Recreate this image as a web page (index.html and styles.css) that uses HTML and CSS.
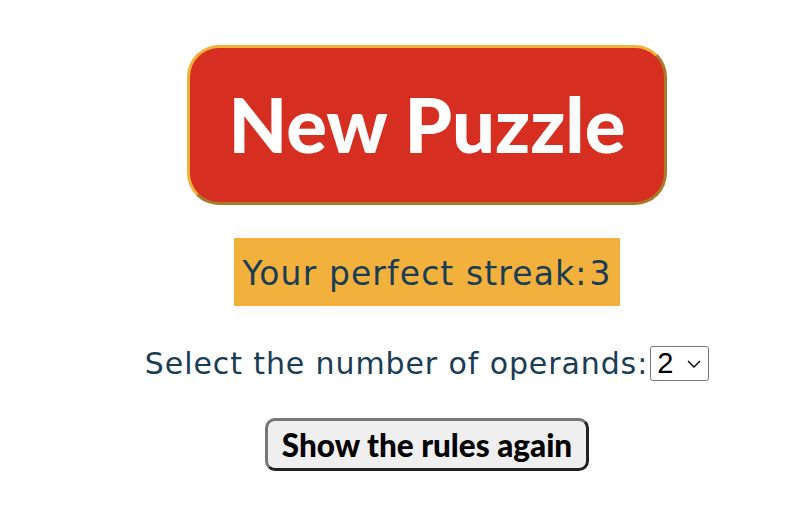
FILE: index.html
```html
<!DOCTYPE html>
<html>
<head>
<meta charset="utf-8">
<link rel="stylesheet" href="styles.css">
</head>
<body>
<main class="page">
  <button class="new-puzzle">New Puzzle</button>
  <div class="streak">Your perfect streak:<span class="streak-num">3</span></div>
  <div class="operands">
    <label for="ops">Select the number of operands:</label>
    <select id="ops" class="ops-select"><option>2</option><option>3</option><option>4</option></select>
  </div>
  <button class="rules">Show the rules again</button>
</main>
</body>
</html>
```

FILE: styles.css
```css
html, body {
  margin: 0;
  padding: 0;
  background: #ffffff;
}
.page {
  display: flex;
  flex-direction: column;
  align-items: center;
  padding: 45px 0 0 64px;
  width: 726px;
}
.new-puzzle {
  width: 480px;
  height: 160px;
  box-sizing: border-box;
  background: #d62e20;
  color: #ffffff;
  border: 3px solid;
  border-color: #f0b03c #a87a2a #a87a2a #f0b03c;
  border-radius: 32px;
  font-family: "Lato", sans-serif;
  font-weight: 900;
  font-size: 76px;
  padding: 0 0 4px 0;
  cursor: pointer;
}
.streak {
  margin-top: 33px;
  width: 386px;
  height: 68px;
  box-sizing: border-box;
  background: #f2b13d;
  color: #1a3d55;
  font-family: "DejaVu Sans", sans-serif;
  font-size: 33px;
  letter-spacing: 1.1px;
  display: flex;
  align-items: center;
  justify-content: center;
  padding-top: 2px;
}
.streak-num {
  margin-left: 2px;
}
.operands {
  margin-top: 40px;
  display: flex;
  align-items: center;
  color: #1a3d55;
  font-family: "DejaVu Sans", sans-serif;
  font-size: 30px;
  letter-spacing: 0.9px;
}
.ops-select {
  -webkit-appearance: none;
  appearance: none;
  margin-left: 2px;
  width: 59px;
  height: 35px;
  box-sizing: border-box;
  padding: 0 0 0 6px;
  font-family: "Liberation Sans", Arial, sans-serif;
  font-size: 29px;
  line-height: 33px;
  letter-spacing: 0;
  color: #000;
  background-color: #fff;
  background-image: url("data:image/svg+xml;utf8,<svg xmlns='http://www.w3.org/2000/svg' width='14' height='8' viewBox='0 0 14 8'><path d='M1 1 L7 7 L13 1' fill='none' stroke='%23000' stroke-width='1.3'/></svg>");
  background-repeat: no-repeat;
  background-position: right 7px center;
  border: 1px solid #767676;
  border-radius: 3px;
}
.rules {
  margin-top: 37px;
  width: 324px;
  height: 53px;
  box-sizing: border-box;
  background: #efefef;
  color: #000;
  border: 3px solid;
  border-color: #777777 #222222 #222222 #777777;
  border-radius: 10px;
  font-family: "Lato", sans-serif;
  font-weight: 900;
  font-size: 31.5px;
  padding: 0;
}
```
